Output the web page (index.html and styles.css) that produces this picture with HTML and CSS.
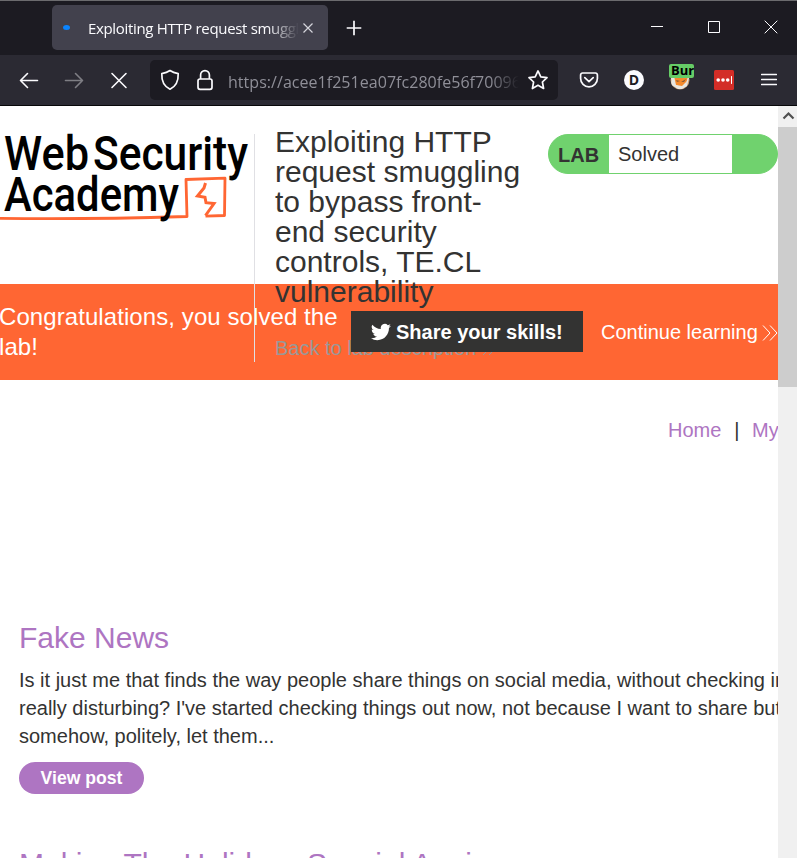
FILE: index.html
```html
<!DOCTYPE html>
<html lang="en">
<head>
<meta charset="utf-8">
<title>Exploiting HTTP request smuggling</title>
<link rel="stylesheet" href="styles.css">
</head>
<body>
<div class="window">
  <div class="tabbar">
    <div class="tab">
      <span class="loading"></span>
      <span class="tab-title">Exploiting HTTP request smuggling</span>
      <svg class="tab-close" width="12" height="12" viewBox="0 0 12 12"><path d="M1.5 1.5l9 9M10.500 1.500l-9 9"/></svg>
    </div>
    <svg class="new-tab" width="16" height="16" viewBox="0 0 16 16"><path d="M8 .7v14.600M.7 8h14.600"/></svg>
    <div class="controls">
      <svg width="14" height="14" viewBox="0 0 14 14"><path d="M1 6.500h12"/></svg>
      <svg width="14" height="14" viewBox="0 0 14 14"><path d="M1.500 1.500h11v11h-11z"/></svg>
      <svg width="14" height="14" viewBox="0 0 14 14"><path d="M.7.700l12.600 12.600M13.300.7L.7 13.300"/></svg>
    </div>
  </div>
  <div class="toolbar">
    <svg class="nav-icon" width="20" height="20" viewBox="0 0 20 20"><path d="M18.500 10.500H1.500M8.500 3.500L1.500 10.500l7 7"/></svg>
    <svg class="nav-icon dim" width="20" height="20" viewBox="0 0 20 20"><path d="M1.500 10.500h17M11.500 3.500l7 7-7 7"/></svg>
    <svg class="nav-icon" width="20" height="20" viewBox="0 0 20 20"><path d="M3 3.500l14 14M17 3.500L3 17.500"/></svg>
    <div class="urlbar">
      <svg width="20" height="22" viewBox="0 0 20 22"><path d="M10 1.500c2.500 1.700 5 2.500 8.200 3.100.3 7-1.700 12.500-8.200 15.600C3.500 17.100 1.500 11.600 1.800 4.600 5 4 7.500 3.200 10 1.500z"/></svg>
      <svg width="16" height="22" viewBox="0 0 16 22"><rect x="1" y="10" width="14" height="10.300" rx="2"/><path d="M3.600 10V6a4.400 4.400 0 0 1 8.800 0v4"/></svg>
      <span class="url">https://acee1f251ea07fc280fe56f70096</span>
      <svg width="22" height="22" viewBox="0 0 22 22"><path d="M11 1.900l2.800 5.900 6.200.8-4.600 4.400 1.200 6.500-5.600-3.200-5.600 3.200 1.200-6.500L2 8.600l6.200-.8z"/></svg>
    </div>
    <div class="extensions">
      <svg width="20" height="18" viewBox="0 0 20 18"><path d="M3.500 2h13a1.900 1.900 0 0 1 1.900 1.900V7.500a8.400 8.400 0 0 1-16.800 0V3.900a1.900 1.900 0 0 1 1.900-1.900zM5.800 6.700L10 10.700l4.200-4"/></svg>
      <span class="ext-d">D</span>
      <span class="burp">
        <svg width="22" height="22" viewBox="0 0 22 22">
          <circle class="b-ring" cx="11" cy="11" r="9.500"/>
          <path class="b-white" d="M2 9h18l-2 8-5 3H9l-6-4z"/>
          <path class="b-fox" d="M5 7h14l-2 8-5 3-5-2z"/>
          <path class="b-white" d="M2 12l5 4 6 1 5-5-1 5-4 2H8l-5-3z"/>
          <path class="b-dark" d="M7 11l4 1-3 1zM12 13l5-3-2 3z"/>
        </svg>
        <span class="burp-badge">Burp</span>
      </span>
      <svg class="pass" width="20" height="20" viewBox="0 0 20 20"><rect width="20" height="20" rx="1.500"/><circle cx="4.200" cy="10" r="1.800"/><circle cx="9" cy="10" r="1.800"/><circle cx="13.700" cy="10" r="1.800"/><path d="M17.500 6.500v7"/></svg>
      <svg class="menu" width="16" height="14" viewBox="0 0 16 14"><path d="M.7 1.500h14.600M.7 6.500h14.600M.7 11.500h14.600"/></svg>
    </div>
  </div>
  <div class="viewport">
    <main class="page">
      <header class="header">
        <svg class="logo" width="254" height="100" viewBox="0 0 254 100">
          <path class="logo-line" d="M0 84.300C70 85.500 120 84.500 187 82.500L186 45.500 225 44.200l-.5 37.300-19 .7"/>
          <path class="logo-bolt" d="M205.500 49l-1.500 5-6.500 8 7.500 1.300 1 5.400 8 .8-8.500 12"/>
          <g class="logo-text">
            <text x="4" y="36" textLength="85" lengthAdjust="spacingAndGlyphs">Web</text>
            <text x="93" y="36" textLength="155" lengthAdjust="spacingAndGlyphs">Security</text>
            <text x="4" y="76.500" textLength="175" lengthAdjust="spacingAndGlyphs">Academy</text>
          </g>
        </svg>
        <div class="title-block">
          <h1>Exploiting HTTP request smuggling to bypass front-end security controls, TE.CL vulnerability</h1>
          <a class="back">Back to lab description <svg width="14" height="16" viewBox="0 0 14 16"><path d="M1 4l5 5-5 5M7 4l5 5-5 5"/></svg></a>
        </div>
        <div class="lab"><b>LAB</b><span>Solved</span></div>
      </header>
      <section class="banner">
        <p>Congratulations, you solved the lab!</p>
        <a class="share"><svg width="20" height="18" viewBox="0 1.500 24 21"><path d="M23.950 4.570a10 10 0 0 1-2.820.77 4.960 4.960 0 0 0 2.160-2.720c-.950.560-2 .960-3.130 1.180a4.920 4.920 0 0 0-8.380 4.480A13.900 13.900 0 0 1 1.640 3.160a4.900 4.900 0 0 0 1.520 6.570 4.900 4.900 0 0 1-2.230-.610v.060a4.920 4.920 0 0 0 3.950 4.830 5 5 0 0 1-2.210.080 4.940 4.940 0 0 0 4.600 3.420A9.870 9.870 0 0 1 0 19.540a14 14 0 0 0 7.550 2.210c9.050 0 14-7.500 14-13.980l-.020-.640a9.900 9.900 0 0 0 2.420-2.560z"/></svg><span>Share your skills!</span></a>
        <a class="continue">Continue learning <svg width="16" height="16" viewBox="0 0 16 16"><path d="M1 .5L8 8l-7 7.500M8 .5L15 8l-7 7.500"/></svg></a>
      </section>
      <nav class="links"><a>Home</a><span>|</span><a>My account</a></nav>
      <article class="post">
        <h2>Fake News</h2>
        <p>Is it just me that finds the way people share things on social media, without checking into it, is<br>really disturbing? I've started checking things out now, not because I want to share but so I can<br>somehow, politely, let them...</p>
        <a class="view">View post</a>
      </article>
      <article class="post">
        <h2>Making The Holidays Special Again</h2>
      </article>
    </main>
    <div class="scrollbar">
      <svg width="19" height="21" viewBox="0 0 19 21"><path d="M5.500 12.500l5-5 5 5"/></svg>
      <div class="thumb"></div>
    </div>
  </div>
</div>
</body>
</html>
```
FILE: styles.css
```css
* { box-sizing: border-box; }
body { margin: 0; font-family: "Liberation Sans", Arial, sans-serif; color: #333332; }
h1, h2, p { margin: 0; font-weight: 400; }
svg { flex: none; fill: none; stroke: #fbfbfe; }
.window { width: 797px; height: 858px; overflow: hidden; display: flex; flex-direction: column; background: #fff; }

.tabbar { flex: none; height: 55px; display: flex; align-items: flex-start; background: #1c1b22; border-top: 1px solid #6b6b6e; padding: 4px 19px 0 52px; }
.tab { width: 276px; height: 45px; display: flex; align-items: center; background: #42414d; border-radius: 5px; padding: 0 14px 0 11px; }
.loading { width: 7px; height: 5px; border-radius: 50%; background: #0a84ff; }
.tab-title { width: 211px; margin: 0 3px 0 18px; overflow: hidden; white-space: nowrap; font: 15px/24px "Open Sans", sans-serif; letter-spacing: -.33px; color: #fbfbfe; mask-image: linear-gradient(90deg, #000 85%, transparent); }
.tab-close { stroke-width: 1.200; stroke: #d5d5dc; }
.new-tab { margin: 15px 0 0 18px; stroke-width: 1.700; }
.controls { display: flex; gap: 43px; margin: 15px 0 0 auto; }

.toolbar { flex: none; height: 51px; display: flex; align-items: center; background: #2b2a33; border-bottom: 1px solid #08080a; padding: 0 20px 0 19px; }
.nav-icon { margin-right: 25px; stroke-width: 1.600; stroke-linecap: round; stroke-linejoin: round; }
.dim { opacity: .4; }
.nav-icon:nth-child(3) { margin-right: 21px; }
.urlbar { width: 408px; height: 40px; display: flex; align-items: center; background: #1c1b22; border-radius: 5px; padding: 0 9px 0 10px; }
.urlbar svg { stroke-width: 1.700; stroke-linejoin: round; }
.urlbar svg:nth-child(2) { margin-left: 17px; }
.url { width: 291px; margin: 4px 8px 0 15px; overflow: hidden; white-space: nowrap; font: 16px/26px "Open Sans", sans-serif; letter-spacing: .04px; color: #8f8f98; mask-image: linear-gradient(90deg, #000 90%, transparent); }
.extensions { flex: 1; display: flex; align-items: center; margin-left: 21px; }
.extensions > svg { stroke-width: 1.700; stroke-linecap: round; stroke-linejoin: round; }
.ext-d { width: 20px; height: 20px; margin-left: 25px; border-radius: 50%; background: #fbfbfe; color: #1c1b22; font: 700 14px/20px "Open Sans", sans-serif; text-align: center; }
.burp { position: relative; width: 25px; height: 22px; margin-left: 25px; }
.burp svg { display: block; stroke: none; }
.b-ring { fill: #c99b70; }
.b-fox { fill: #f58a2c; }
.b-white { fill: #e8e6e2; }
.b-dark { fill: #8b5a35; }
.burp-badge { position: absolute; left: 0; top: -5px; width: 25px; height: 14px; overflow: hidden; border-radius: 2px; background: #66cc66; color: #000; font: 700 13px/13px "Open Sans", sans-serif; padding-left: 2px; }
.extensions .pass { stroke: #fff; stroke-width: 1; margin-left: 20px; }
.pass rect { fill: #d32d27; stroke: none; }
.pass circle { fill: #fff; stroke: none; }
.menu { margin-left: auto; }

.viewport { flex: 1; min-height: 0; display: flex; }
.page { width: 778px; overflow: hidden; font-size: 20px; }
.header { position: relative; z-index: 1; height: 178px; padding-top: 28px; display: grid; grid-template-columns: 254px 294px 230px; align-items: start; }
.logo { overflow: visible; }
.logo-text { font: 500 48px Roboto, sans-serif; fill: #000; stroke: none; }
.logo-line { stroke: #ff6633; stroke-width: 2.800; stroke-linejoin: round; }
.logo-bolt { stroke: #ff6633; stroke-width: 3; }
.title-block { height: 228px; border-left: 1px solid #e0e0e4; padding: 0 25px 0 20px; }
h1 { margin-top: -7px; font-size: 30px; line-height: 30px; }
.back { display: block; margin-top: 27px; line-height: 28px; color: #999; white-space: nowrap; }
.back svg { stroke: #999; vertical-align: -2px; }
.lab { height: 40px; display: flex; border: 1px solid #70d26e; border-radius: 20px; background: #70d26e; line-height: 38px; }
.lab b { width: 60px; padding-left: 9px; line-height: 40px; }
.lab span { width: 123px; padding-left: 9px; background: #fff; }

.banner { height: 96px; display: flex; align-items: center; background: #ff6633; color: #fff; }
.banner p { width: 351px; margin-left: -1px; margin-right: 1px; font-size: 24px; letter-spacing: .08px; line-height: 30px; }
.share { position: relative; z-index: 2; width: 232px; height: 41px; margin-bottom: 1px; display: flex; align-items: center; gap: 5px; padding-left: 20px; background: #333332; font-weight: 700; line-height: 41px; white-space: nowrap; }
.share svg { fill: #fff; stroke: none; }
.share span { padding-top: 2px; }
.banner p, .share, .continue { flex: none; }
.continue { margin-left: 18px; white-space: nowrap; }
.continue svg { margin-left: -1px; stroke: #fff; vertical-align: -2px; }

.links { display: flex; margin: 36px 0 0 668px; line-height: 28px; white-space: nowrap; color: #ae75c2; }
.links span { margin: 0 12.500px 0 13px; color: #333332; }
.post { height: 226px; padding-left: 19px; white-space: nowrap; }
.links + .post { margin-top: 174px; }
h2 { font-size: 30px; line-height: 40px; color: #ae75c2; }
.post p { margin-top: 8px; line-height: 28px; }
.view { display: block; width: 125px; height: 32px; margin-top: 12px; border-radius: 16px; background: #ae75c2; color: #fff; font-size: 17.600px; font-weight: 700; line-height: 32px; text-align: center; }

.scrollbar { width: 19px; background: #f0f0f0; }
.scrollbar svg { display: block; stroke: #505050; stroke-width: 2.200; }
.thumb { height: 260px; background: #cdcdcd; }
```
